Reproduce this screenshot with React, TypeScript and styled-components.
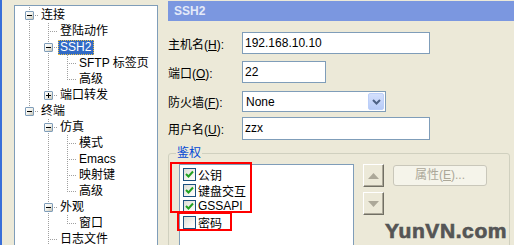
import styled, { createGlobalStyle } from 'styled-components';

const GlobalStyle = createGlobalStyle`
  html, body {
    margin: 0;
    padding: 0;
    background: #ece9d8;
  }
  body {
    font-family: "Liberation Sans", "Noto Sans CJK SC", sans-serif;
    font-size: 12px;
    color: #000;
  }
`;

type Guide = 'pipe' | 'tee' | 'elbow' | 'blank';

interface TreeItem {
  label: string;
  guides: Guide[];
  expander?: 'minus' | 'plus';
  selected?: boolean;
}

const treeItems: TreeItem[] = [
  { label: '连接', guides: ['tee'], expander: 'minus' },
  { label: '登陆动作', guides: ['pipe', 'tee'] },
  { label: 'SSH2', guides: ['pipe', 'tee'], expander: 'minus', selected: true },
  { label: 'SFTP 标签页', guides: ['pipe', 'pipe', 'tee'] },
  { label: '高级', guides: ['pipe', 'pipe', 'elbow'] },
  { label: '端口转发', guides: ['pipe', 'elbow'], expander: 'plus' },
  { label: '终端', guides: ['elbow'], expander: 'minus' },
  { label: '仿真', guides: ['blank', 'tee'], expander: 'minus' },
  { label: '模式', guides: ['blank', 'pipe', 'tee'] },
  { label: 'Emacs', guides: ['blank', 'pipe', 'tee'] },
  { label: '映射键', guides: ['blank', 'pipe', 'tee'] },
  { label: '高级', guides: ['blank', 'pipe', 'elbow'] },
  { label: '外观', guides: ['blank', 'tee'], expander: 'minus' },
  { label: '窗口', guides: ['blank', 'pipe', 'elbow'] },
  { label: '日志文件', guides: ['blank', 'tee'] },
];

const authItems = [
  { label: '公钥', checked: true },
  { label: '键盘交互', checked: true },
  { label: 'GSSAPI', checked: true },
  { label: '密码', checked: false },
];

const Screen = styled.div`
  position: relative;
  width: 514px;
  height: 245px;
  overflow: hidden;
  display: flex;
  background: #ece9d8;
`;

const WindowEdge = styled.div`
  flex: none;
  width: 2px;
  background: #3a6fd9;
`;

const TreePane = styled.div`
  flex: none;
  padding: 5px 0 0 12px;
`;

const TreeBox = styled.div`
  box-sizing: border-box;
  width: 144px;
  height: 260px;
  border: 1px solid #7f9db9;
  background: #fff;
  padding: 1px 0 0 5px;
`;

const TreeRow = styled.div`
  display: flex;
  align-items: center;
  height: 16px;
`;

const dots = '#a0a0a0';

const GuideCell = styled.div<{ $guide: Guide }>`
  position: relative;
  flex: none;
  width: 19px;
  height: 16px;

  &::before {
    content: '';
    display: ${({ $guide }) => ($guide === 'blank' ? 'none' : 'block')};
    position: absolute;
    left: 9px;
    top: 0;
    width: 1px;
    height: ${({ $guide }) => ($guide === 'elbow' ? '9px' : '16px')};
    background: repeating-linear-gradient(to bottom, ${dots} 0 1px, transparent 1px 2px);
  }

  &::after {
    content: '';
    display: ${({ $guide }) => ($guide === 'tee' || $guide === 'elbow' ? 'block' : 'none')};
    position: absolute;
    left: 10px;
    top: 8px;
    width: 9px;
    height: 1px;
    background: repeating-linear-gradient(to right, transparent 0 1px, ${dots} 1px 2px);
  }
`;

const Expander = styled.div`
  position: absolute;
  z-index: 1;
  left: 5px;
  top: 4px;
  box-sizing: border-box;
  width: 9px;
  height: 9px;
  border: 1px solid #7f9db9;
  border-radius: 1px;
  background: linear-gradient(135deg, #ffffff 0%, #f0f0ea 50%, #c6c3b5 100%);
`;

const ExpanderBar = styled.span<{ $vertical?: boolean }>`
  position: absolute;
  background: #000;
  left: ${({ $vertical }) => ($vertical ? '3px' : '1px')};
  top: ${({ $vertical }) => ($vertical ? '1px' : '3px')};
  width: ${({ $vertical }) => ($vertical ? '1px' : '5px')};
  height: ${({ $vertical }) => ($vertical ? '5px' : '1px')};
`;

const TreeLabel = styled.span<{ $selected?: boolean }>`
  box-sizing: border-box;
  height: 15px;
  line-height: 13px;
  padding: 0 2px 0 1px;
  white-space: nowrap;
  color: ${({ $selected }) => ($selected ? '#fff' : '#000')};
  background: ${({ $selected }) => ($selected ? '#316ac5' : 'transparent')};
  border: 1px ${({ $selected }) => ($selected ? 'dotted #e8c04a' : 'solid transparent')};
`;

const RightPane = styled.div`
  flex: 1;
  min-width: 0;
  margin-left: 10px;
  padding-top: 1px;
`;

const Header = styled.div`
  height: 20px;
  line-height: 20px;
  padding-left: 6px;
  background: #7b97e0;
  color: #e4eaf9;
  font-weight: bold;
  font-size: 12px;
`;

const FormRow = styled.div<{ $gap: number }>`
  display: flex;
  align-items: center;
  margin-top: ${({ $gap }) => $gap}px;
`;

const FieldLabel = styled.div`
  flex: none;
  width: 74px;
  white-space: nowrap;
`;

const TextField = styled.div<{ $width: number; $height: number }>`
  box-sizing: border-box;
  width: ${({ $width }) => $width}px;
  height: ${({ $height }) => $height}px;
  line-height: ${({ $height }) => $height - 2}px;
  padding: 0 2px;
  border: 1px solid #7f9db9;
  background: #fff;
`;

const Select = styled.div`
  box-sizing: border-box;
  display: flex;
  align-items: center;
  justify-content: space-between;
  width: 144px;
  height: 21px;
  padding-left: 3px;
  border: 1px solid #7f9db9;
  background: #fff;
`;

const SelectButton = styled.div`
  display: flex;
  align-items: center;
  justify-content: center;
  box-sizing: border-box;
  width: 16px;
  height: 17px;
  margin: 1px;
  border: 1px solid #bccff9;
  border-radius: 2px;
  background: linear-gradient(180deg, #d4e0fd 0%, #b7cbf7 100%);
`;

const GroupBox = styled.fieldset`
  box-sizing: border-box;
  margin: 6px 4px 0 0;
  padding: 4px 0 0 10px;
  height: 140px;
  min-width: 0;
  border: 1px solid #d0d0bf;
  border-radius: 3px;
`;

const GroupLegend = styled.legend`
  padding: 0 1px;
  margin-left: -3px;
  line-height: 14px;
  font-size: 12px;
  color: #0046d5;
`;

const GroupBody = styled.div`
  display: flex;
  align-items: flex-start;
`;

const ListBox = styled.div`
  box-sizing: border-box;
  flex: none;
  width: 175px;
  height: 120px;
  padding: 1px 0 0 3px;
  border: 1px solid #7f9db9;
  background: #fff;
`;

const CheckRow = styled.div`
  display: flex;
  align-items: center;
  gap: 2px;
  height: 16px;
`;

const CheckBox = styled.div`
  box-sizing: border-box;
  display: flex;
  align-items: center;
  justify-content: center;
  flex: none;
  width: 13px;
  height: 13px;
  border: 1px solid #1c5180;
  background: linear-gradient(135deg, #dcdcd5 0%, #f4f4f0 60%, #ffffff 100%);
`;

const SideButtons = styled.div`
  display: flex;
  flex-direction: column;
  gap: 5px;
  margin-left: 9px;
`;

const ArrowButton = styled.div`
  box-sizing: border-box;
  display: flex;
  align-items: center;
  justify-content: center;
  width: 21px;
  height: 23px;
  background: #ece9d8;
  border-top: 1px solid #ffffff;
  border-left: 1px solid #ffffff;
  border-right: 1px solid #716f64;
  border-bottom: 1px solid #716f64;
  box-shadow: inset -1px -1px 0 #aca899;
`;

const PropertyButton = styled.div`
  box-sizing: border-box;
  width: 94px;
  height: 21px;
  margin: 1px 0 0 9px;
  line-height: 19px;
  text-align: center;
  color: #aca899;
  background: #f5f4ea;
  border: 1px solid #c9c7ba;
  border-radius: 3px;
`;

const Mnemonic = styled.span`
  text-decoration: underline;
`;

const Callout = styled.div<{ $left: number; $top: number; $width: number; $height: number }>`
  position: absolute;
  box-sizing: border-box;
  left: ${({ $left }) => $left}px;
  top: ${({ $top }) => $top}px;
  width: ${({ $width }) => $width}px;
  height: ${({ $height }) => $height}px;
  border: 2px solid #ff0000;
  pointer-events: none;
`;

const Watermark = styled.div`
  position: absolute;
  left: 385px;
  top: 219px;
  font-family: "Liberation Sans", sans-serif;
  font-size: 21px;
  font-weight: 900;
  letter-spacing: 0.6px;
  color: #555555;
  -webkit-text-stroke: 0.7px #555555;
`;

const Check = () => (
  <svg width="9" height="9" viewBox="0 0 9 9">
    <path d="M1 4 L3.5 6.5 L8 1.5" fill="none" stroke="#21a121" strokeWidth="2" />
  </svg>
);

const Chevron = () => (
  <svg width="9" height="6" viewBox="0 0 9 6">
    <path d="M1 1 L4.5 4.5 L8 1" fill="none" stroke="#4d6185" strokeWidth="2" />
  </svg>
);

const Triangle = ({ up }: { up?: boolean }) => (
  <svg width="11" height="6" viewBox="0 0 11 6">
    <path d={up ? 'M0 6 L5.5 0 L11 6 Z' : 'M0 0 L5.5 6 L11 0 Z'} fill="#aca899" />
  </svg>
);

export default function App() {
  return (
    <>
      <GlobalStyle />
      <Screen>
        <WindowEdge />
        <TreePane>
          <TreeBox>
            {treeItems.map((item, i) => (
              <TreeRow key={i}>
                {item.guides.map((g, j) => (
                  <GuideCell key={j} $guide={g}>
                    {item.expander && j === item.guides.length - 1 && (
                      <Expander>
                        <ExpanderBar />
                        {item.expander === 'plus' && <ExpanderBar $vertical />}
                      </Expander>
                    )}
                  </GuideCell>
                ))}
                <TreeLabel $selected={item.selected}>{item.label}</TreeLabel>
              </TreeRow>
            ))}
          </TreeBox>
        </TreePane>

        <RightPane>
          <Header>SSH2</Header>

          <FormRow $gap={11}>
            <FieldLabel>
              主机名(<Mnemonic>H</Mnemonic>):
            </FieldLabel>
            <TextField $width={188} $height={22}>192.168.10.10</TextField>
          </FormRow>
          <FormRow $gap={7}>
            <FieldLabel>
              端口(<Mnemonic>O</Mnemonic>):
            </FieldLabel>
            <TextField $width={84} $height={22}>22</TextField>
          </FormRow>
          <FormRow $gap={8}>
            <FieldLabel>
              防火墙(<Mnemonic>F</Mnemonic>):
            </FieldLabel>
            <Select>
              <span>None</span>
              <SelectButton>
                <Chevron />
              </SelectButton>
            </Select>
          </FormRow>
          <FormRow $gap={5}>
            <FieldLabel>
              用户名(<Mnemonic>U</Mnemonic>):
            </FieldLabel>
            <TextField $width={188} $height={23}>zzx</TextField>
          </FormRow>

          <GroupBox>
            <GroupLegend>鉴权</GroupLegend>
            <GroupBody>
              <ListBox>
                {authItems.map((a) => (
                  <CheckRow key={a.label}>
                    <CheckBox>{a.checked && <Check />}</CheckBox>
                    <span>{a.label}</span>
                  </CheckRow>
                ))}
              </ListBox>
              <SideButtons>
                <ArrowButton>
                  <Triangle up />
                </ArrowButton>
                <ArrowButton>
                  <Triangle />
                </ArrowButton>
              </SideButtons>
              <PropertyButton>
                属性(<Mnemonic>E</Mnemonic>)...
              </PropertyButton>
            </GroupBody>
          </GroupBox>
        </RightPane>

        <Callout $left={170} $top={162} $width={82} $height={51} />
        <Callout $left={177} $top={212} $width={55} $height={19} />
        <Watermark>YunVN.com</Watermark>
      </Screen>
    </>
  );
}
